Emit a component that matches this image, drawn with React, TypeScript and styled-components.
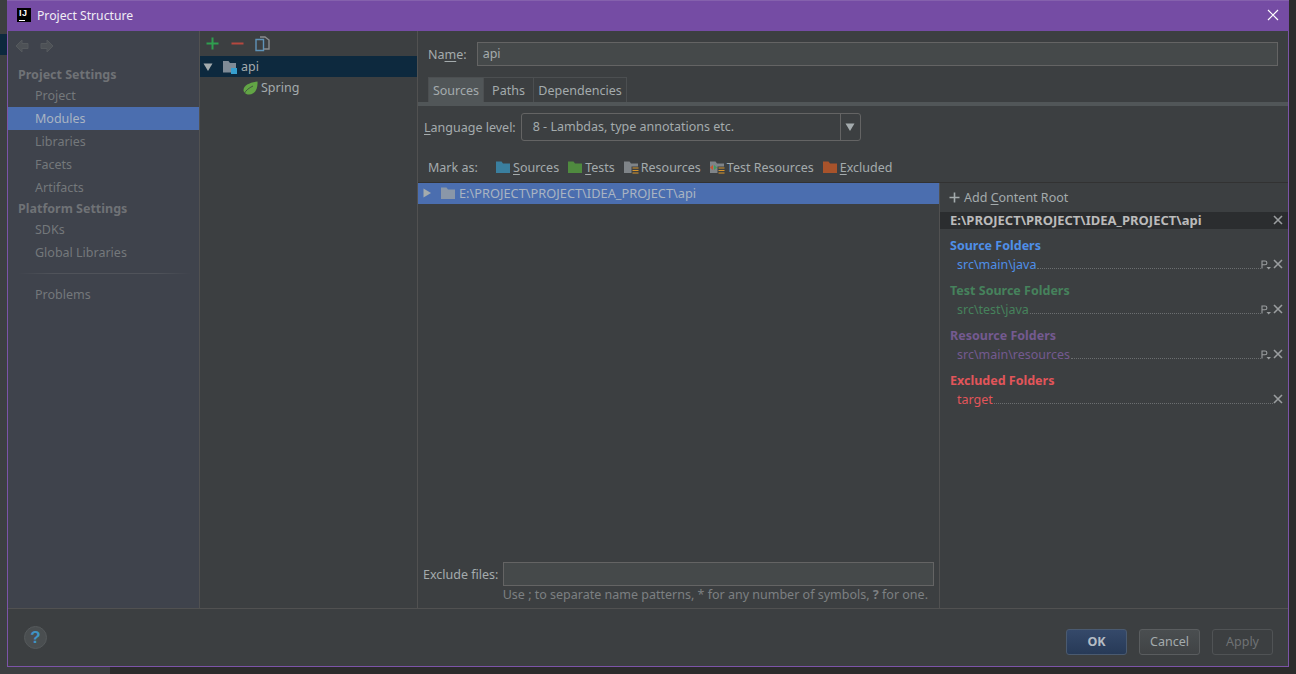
import React from 'react';
import styled, { createGlobalStyle } from 'styled-components';

const Global = createGlobalStyle`
  html, body {
    margin: 0;
    padding: 0;
    background: #2b2b2b;
    overflow: hidden;
  }
  * {
    box-sizing: border-box;
  }
`;

const Screen = styled.div`
  width: 1296px;
  height: 674px;
  padding: 0 7px 7px;
  font-family: 'Noto Sans', 'Open Sans', sans-serif;
  font-size: 12.5px;
  color: #a4abad;
  background:
    linear-gradient(#0d293e, #0d293e) 0 34px / 7px 21px no-repeat,
    linear-gradient(#3c3f41, #3c3f41) 0 667px / 110px 7px no-repeat,
    linear-gradient(#3c3f41, #3c3f41) 0 0 / 7px 667px no-repeat,
    #2b2b2b;
`;

const Dialog = styled.div`
  height: 667px;
  display: flex;
  flex-direction: column;
  background: #3c3f41;
  border: 1px solid #7c54a8;
  border-top: 0;
`;

const TitleBar = styled.div`
  height: 31px;
  flex: none;
  margin: 0 -1px;
  padding: 0 10px 2px;
  display: flex;
  align-items: center;
  gap: 6px;
  background: #754ca4;
  border-top: 1px solid #8561ad;
  color: #f0ecf5;
  font-size: 12.2px;
`;

const TitleText = styled.span`
  flex: 1;
`;

const AppLogo = styled.div`
  width: 14px;
  height: 14px;
  background: #000;
  color: #fff;
  font: 700 9px/10px 'Liberation Sans', sans-serif;
  padding-left: 2px;
  letter-spacing: 0.5px;
  position: relative;
  &::after {
    content: '';
    position: absolute;
    left: 2px;
    bottom: 1px;
    width: 6px;
    height: 1px;
    background: #fff;
  }
`;

const Body = styled.div`
  flex: 1;
  display: flex;
  min-height: 0;
  border-bottom: 1px solid #515151;
`;

const Sidebar = styled.div`
  width: 192px;
  flex: none;
  background: #3f434c;
  border-right: 1px solid #515151;
  padding-top: 4px;
`;

const NavArrows = styled.div`
  height: 21px;
  padding-left: 7px;
  display: flex;
  align-items: center;
  gap: 11px;
  margin-bottom: 9px;
`;

const NavArrow = styled.svg<{ $flip?: boolean }>`
  transform: ${(p) => (p.$flip ? 'scaleX(-1)' : 'none')};
`;

const SectionTitle = styled.div`
  height: 19px;
  line-height: 19px;
  padding-left: 10px;
  font-weight: 700;
  color: #6f7276;
`;

const NavItem = styled.div<{ $active?: boolean }>`
  height: 23px;
  line-height: 23px;
  padding-left: 27px;
  color: ${(p) => (p.$active ? '#a9b4c2' : '#74787b')};
  background: ${(p) => (p.$active ? '#4b6eaf' : 'transparent')};
`;

const NavRule = styled.div`
  height: 1px;
  margin: 9px 8px 9px 10px;
  background: linear-gradient(90deg, transparent, #50535a 20%, #50535a 80%, transparent);
`;

const ModuleColumn = styled.div`
  width: 218px;
  flex: none;
  border-right: 1px solid #515151;
`;

const ModuleTools = styled.div`
  height: 25px;
  padding-left: 6px;
  display: flex;
  align-items: center;
  gap: 11.5px;
`;

const TreeRow = styled.div<{ $selected?: boolean; $indent: number }>`
  height: 21px;
  display: flex;
  align-items: center;
  gap: 3px;
  padding-left: ${(p) => p.$indent}px;
  background: ${(p) => (p.$selected ? '#0d293e' : 'transparent')};
  color: #a4abad;
`;

const ModuleIcon = styled.svg`
  margin-left: 6px;
`;

const Content = styled.div`
  flex: 1;
  min-width: 0;
  display: flex;
  flex-direction: column;
`;

const NameRow = styled.div`
  height: 46px;
  flex: none;
  padding: 0 10px 0 10px;
  display: flex;
  align-items: center;
  gap: 10px;
`;

const Label = styled.span`
  color: #a4abad;
  white-space: nowrap;
`;

const Key = styled.span`
  text-decoration: underline;
  text-underline-offset: 2px;
`;

const Field = styled.div`
  flex: 1;
  height: 24px;
  line-height: 22px;
  padding-left: 5px;
  background: #45494a;
  border: 1px solid #646464;
  color: #a4abad;
`;

const Tabs = styled.div`
  height: 29px;
  flex: none;
  padding-left: 10px;
  display: flex;
  border-bottom: 4px solid #515658;
`;

const Tab = styled.div<{ $active?: boolean; $width: number }>`
  width: ${(p) => p.$width}px;
  height: 25px;
  line-height: 25px;
  text-align: center;
  border: 1px solid #4c4f51;
  border-left-width: ${(p) => (p.$active ? 1 : 0)}px;
  border-bottom: 0;
  background: ${(p) => (p.$active ? '#515658' : 'transparent')};
  color: #a4abad;
`;

const LevelRow = styled.div`
  height: 42px;
  flex: none;
  padding-left: 6px;
  display: flex;
  align-items: center;
  gap: 5px;
`;

const Select = styled.div`
  width: 340px;
  height: 28px;
  display: flex;
  border: 1px solid #646464;
  border-radius: 3px;
`;

const SelectText = styled.div`
  flex: 1;
  line-height: 26px;
  padding-left: 11px;
`;

const SelectArrow = styled.div`
  width: 20px;
  border-left: 1px solid #646464;
  display: flex;
  align-items: center;
  justify-content: center;
`;

const MarkRow = styled.div`
  height: 35px;
  flex: none;
  padding: 4px 0 0 10px;
  display: flex;
  align-items: center;
  border-bottom: 1px solid #323232;
`;

const MarkLabel = styled.span`
  width: 67px;
`;

const MarkItem = styled.span`
  display: flex;
  align-items: center;
  gap: 2px;
  margin-right: 8px;
`;

const Split = styled.div`
  flex: 1;
  min-height: 0;
  display: flex;
`;

const RootsColumn = styled.div`
  width: 522px;
  flex: none;
  display: flex;
  flex-direction: column;
  border-right: 1px solid #515151;
`;

const RootRow = styled.div`
  height: 21px;
  flex: none;
  display: flex;
  align-items: center;
  padding: 0 0 2px 4px;
  gap: 8px;
  background: #4b6eaf;
  color: #a9b4c2;
  font-size: 12.8px;
`;

const RootFolder = styled.svg`
  margin-right: -5px;
`;

const RootsSpacer = styled.div`
  flex: 1;
`;

const ExcludeRow = styled.div`
  height: 24px;
  flex: none;
  margin: 0 5px 0 5px;
  display: flex;
  align-items: center;
  gap: 5px;
`;

const ExcludeField = styled.div`
  flex: 1;
  height: 24px;
  background: #45494a;
  border: 1px solid #646464;
`;

const Hint = styled.div`
  height: 22px;
  flex: none;
  padding: 0 11px 6px 0;
  display: flex;
  align-items: center;
  justify-content: flex-end;
  color: #7c8082;
`;

const FoldersColumn = styled.div`
  flex: 1;
  min-width: 0;
`;

const AddRoot = styled.div`
  height: 29px;
  padding-left: 9px;
  display: flex;
  align-items: center;
  gap: 4px;
`;

const RootHeader = styled.div`
  height: 17px;
  padding: 0 5px 2px 10px;
  display: flex;
  align-items: center;
  justify-content: space-between;
  background: #2b2d2f;
  color: #bbbbbb;
  font-size: 13px;
  font-weight: 700;
  margin-bottom: 7px;
`;

const FolderGroup = styled.div`
  height: 45px;
  padding: 0 5px 0 10px;
`;

const GroupTitle = styled.div<{ $color: string }>`
  height: 19px;
  line-height: 19px;
  font-weight: 700;
  color: ${(p) => p.$color};
`;

const FolderRow = styled.div<{ $color: string }>`
  height: 18px;
  display: flex;
  align-items: center;
  padding-left: 7px;
  color: ${(p) => p.$color};
`;

const Leader = styled.div`
  flex: 1;
  height: 9px;
  margin: 0 0 0 1px;
  border-bottom: 1px dotted #6b6e70;
`;

const RowIcons = styled.div`
  display: flex;
  align-items: center;
  gap: 2px;
  flex: none;
`;

const Footer = styled.div`
  height: 57px;
  flex: none;
  padding: 0 15px 11px 16px;
  display: flex;
  align-items: flex-end;
  justify-content: space-between;
`;

const HelpButton = styled.div`
  width: 23px;
  height: 23px;
  margin-bottom: 6px;
  border-radius: 50%;
  background: #4a4e50;
  border: 1px solid #55595b;
  color: #3f93c4;
  font: 700 17px/21px 'Liberation Sans', sans-serif;
  text-align: center;
`;

const Buttons = styled.div`
  display: flex;
  gap: 12px;
`;

const Button = styled.div<{ $kind: 'primary' | 'normal' | 'disabled' }>`
  width: 61px;
  height: 26px;
  line-height: 24px;
  text-align: center;
  border-radius: 3px;
  border: 1px solid ${(p) => (p.$kind === 'primary' ? '#4a5a70' : p.$kind === 'normal' ? '#5a5d5f' : '#505355')};
  font-weight: ${(p) => (p.$kind === 'primary' ? 700 : 400)};
  color: ${(p) => (p.$kind === 'primary' ? '#b4bcc4' : p.$kind === 'normal' ? '#a4abad' : '#6f7274')};
  background: ${(p) =>
    p.$kind === 'primary'
      ? 'linear-gradient(#35496a, #273a57)'
      : p.$kind === 'normal'
        ? 'linear-gradient(#4a4e50, #404345)'
        : 'transparent'};
`;

const Arrow = ({ flip }: { flip?: boolean }) => (
  <NavArrow $flip={flip} width="14" height="14" viewBox="0 0 14 14">
    <path d="M1 7 7 1v3.5h6v5H7V13z" fill="#4d5156" stroke="#55595d" />
  </NavArrow>
);

const Folder = ({ color, badge }: { color: string; badge?: React.ReactNode }) => (
  <svg width="16" height="14" viewBox="0 0 16 14">
    <path d="M1 1.5h5.5l1.5 2h7v9.5H1z" fill={color} />
    {badge}
  </svg>
);

const Lines = () => (
  <>
    <path d="M8.5 6.5H16V14H8.5z" fill="#3c3f41" />
    <path d="M9.5 7.5h6v1h-6zM9.5 10h6v1h-6zM9.5 12.5h6v1h-6z" fill="#d9962b" />
  </>
);

const Cross = ({ size = 10, color = '#9a9d9f' }: { size?: number; color?: string }) => (
  <svg width={size} height={size} viewBox="0 0 10 10">
    <path d="M1 1 9 9M9 1 1 9" stroke={color} strokeWidth="1.6" fill="none" />
  </svg>
);

const Props = () => (
  <svg width="10" height="11" viewBox="0 0 10 11">
    <path d="M1 9.5V2h3a1.9 1.9 0 0 1 0 3.8H1" stroke="#9a9d9f" strokeWidth="1.1" fill="none" />
    <path d="M5.5 8H10L7.7 10.4z" fill="#9a9d9f" />
  </svg>
);

const Triangle = ({ right }: { right?: boolean }) => (
  <svg width="10" height="10" viewBox="0 0 10 10">
    <path d={right ? 'M1.5 0.5 9 5 1.5 9.5z' : 'M0.5 1.5h9L5 9z'} fill="#a4abad" />
  </svg>
);

const groups = [
  { title: 'Source Folders', path: 'src\\main\\java', color: '#4f8fe8', prop: true },
  { title: 'Test Source Folders', path: 'src\\test\\java', color: '#46825c', prop: true },
  { title: 'Resource Folders', path: 'src\\main\\resources', color: '#745a90', prop: true },
  { title: 'Excluded Folders', path: 'target', color: '#e2555a', prop: false },
];

export default function App() {
  return (
    <Screen>
      <Global />
      <Dialog>
        <TitleBar>
          <AppLogo>IJ</AppLogo>
          <TitleText>Project Structure</TitleText>
          <svg width="12" height="12" viewBox="0 0 12 12">
            <path d="M1 1 11 11M11 1 1 11" stroke="#fff" strokeWidth="1.2" />
          </svg>
        </TitleBar>
        <Body>
          <Sidebar>
            <NavArrows>
              <Arrow />
              <Arrow flip />
            </NavArrows>
            <SectionTitle>Project Settings</SectionTitle>
            <NavItem>Project</NavItem>
            <NavItem $active>Modules</NavItem>
            <NavItem>Libraries</NavItem>
            <NavItem>Facets</NavItem>
            <NavItem>Artifacts</NavItem>
            <SectionTitle>Platform Settings</SectionTitle>
            <NavItem>SDKs</NavItem>
            <NavItem>Global Libraries</NavItem>
            <NavRule />
            <NavItem>Problems</NavItem>
          </Sidebar>
          <ModuleColumn>
            <ModuleTools>
              <svg width="13" height="13" viewBox="0 0 13 13">
                <path d="M6.5 0.5v12M0.5 6.5h12" stroke="#2f9e4f" strokeWidth="2" />
              </svg>
              <svg width="13" height="13" viewBox="0 0 13 13">
                <path d="M0.5 6.5h12" stroke="#b5483f" strokeWidth="2" />
              </svg>
              <svg width="15" height="16" viewBox="0 0 15 16">
                <path d="M5 1h5l4 3v9H9" fill="none" stroke="#8a8d8f" strokeWidth="1.4" />
                <path d="M1 3.5h7.5v11H1z" fill="#3c3f41" stroke="#5f93b8" strokeWidth="1.4" />
              </svg>
            </ModuleTools>
            <TreeRow $selected $indent={3}>
              <Triangle />
              <ModuleIcon width="16" height="16" viewBox="0 0 16 16">
                <path d="M1 2h5.5l1.5 2h6v9.5H1z" fill="#7f8b96" />
                <path d="M9 9h6v6H9z" fill="#37a0cf" />
              </ModuleIcon>
              <span>api</span>
            </TreeRow>
            <TreeRow $indent={43}>
              <svg width="15" height="14" viewBox="0 0 15 14">
                <path d="M14.5 0.5C15 8 12 13.5 6 13.5 3 13.5 0.5 11.5 0.5 9 0.5 4 7 1.5 14.5 0.5z" fill="#62a545" />
                <path d="M1 13C3 9 6 7 10 5" stroke="#3c3f41" strokeWidth="0.8" fill="none" />
              </svg>
              <span>Spring</span>
            </TreeRow>
          </ModuleColumn>
          <Content>
            <NameRow>
              <Label>
                Na<Key>m</Key>e:
              </Label>
              <Field>api</Field>
            </NameRow>
            <Tabs>
              <Tab $active $width={56}>
                Sources
              </Tab>
              <Tab $width={50}>Paths</Tab>
              <Tab $width={93}>Dependencies</Tab>
            </Tabs>
            <LevelRow>
              <Label>
                <Key>L</Key>anguage level:
              </Label>
              <Select>
                <SelectText>8 - Lambdas, type annotations etc.</SelectText>
                <SelectArrow>
                  <Triangle />
                </SelectArrow>
              </Select>
            </LevelRow>
            <MarkRow>
              <MarkLabel>Mark as:</MarkLabel>
              <MarkItem>
                <Folder color="#3a7f9f" />
                <span>
                  <Key>S</Key>ources
                </span>
              </MarkItem>
              <MarkItem>
                <Folder color="#4f8a3f" />
                <span>
                  <Key>T</Key>ests
                </span>
              </MarkItem>
              <MarkItem>
                <Folder color="#7f8488" badge={<Lines />} />
                <span>Resources</span>
              </MarkItem>
              <MarkItem>
                <Folder
                  color="#7f8488"
                  badge={
                    <>
                      <Lines />
                      <path d="M1 7.5 4 5v5z" fill="#c8562f" />
                      <path d="M5 5l3 2.5L5 10z" fill="#3f9f5f" />
                    </>
                  }
                />
                <span>Test Resources</span>
              </MarkItem>
              <MarkItem>
                <Folder color="#a8532b" />
                <span>
                  <Key>E</Key>xcluded
                </span>
              </MarkItem>
            </MarkRow>
            <Split>
              <RootsColumn>
                <RootRow>
                  <Triangle right />
                  <RootFolder width="16" height="14" viewBox="0 0 16 14">
                    <path d="M1 1.5h5.5l1.5 2h7v9.5H1z" fill="#8a97a8" />
                  </RootFolder>
                  <span>E:\PROJECT\PROJECT\IDEA_PROJECT\api</span>
                </RootRow>
                <RootsSpacer />
                <ExcludeRow>
                  <Label>Exclude files:</Label>
                  <ExcludeField />
                </ExcludeRow>
                <Hint>
                  <span>
                    Use ; to separate name patterns, * for any number of symbols, <b>?</b> for one.
                  </span>
                </Hint>
              </RootsColumn>
              <FoldersColumn>
                <AddRoot>
                  <svg width="11" height="11" viewBox="0 0 11 11">
                    <path d="M5.5 0.5v10M0.5 5.5h10" stroke="#a4abad" strokeWidth="1.6" />
                  </svg>
                  <span>
                    Add <Key>C</Key>ontent Root
                  </span>
                </AddRoot>
                <RootHeader>
                  <span>E:\PROJECT\PROJECT\IDEA_PROJECT\api</span>
                  <Cross />
                </RootHeader>
                {groups.map((g) => (
                  <FolderGroup key={g.title}>
                    <GroupTitle $color={g.color}>{g.title}</GroupTitle>
                    <FolderRow $color={g.color}>
                      <span>{g.path}</span>
                      <Leader />
                      <RowIcons>
                        {g.prop && <Props />}
                        <Cross />
                      </RowIcons>
                    </FolderRow>
                  </FolderGroup>
                ))}
              </FoldersColumn>
            </Split>
          </Content>
        </Body>
        <Footer>
          <HelpButton>?</HelpButton>
          <Buttons>
            <Button $kind="primary">OK</Button>
            <Button $kind="normal">Cancel</Button>
            <Button $kind="disabled">Apply</Button>
          </Buttons>
        </Footer>
      </Dialog>
    </Screen>
  );
}
